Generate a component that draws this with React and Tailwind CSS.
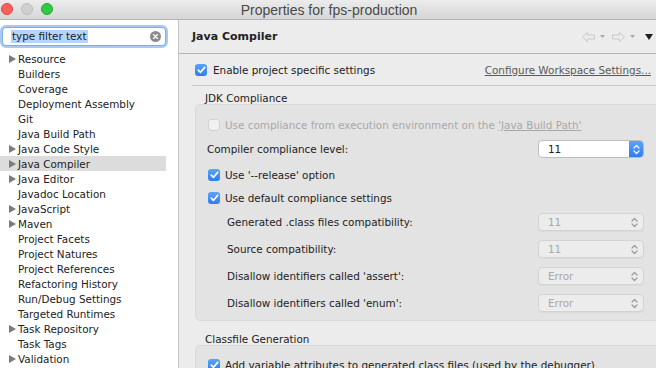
import React from "react";

const FONT = { fontFamily: '"DejaVu Sans", Verdana, sans-serif' };

const tree = [
  ["Resource", true],
  ["Builders", false],
  ["Coverage", false],
  ["Deployment Assembly", false],
  ["Git", false],
  ["Java Build Path", false],
  ["Java Code Style", true],
  ["Java Compiler", true, true],
  ["Java Editor", true],
  ["Javadoc Location", false],
  ["JavaScript", true],
  ["Maven", true],
  ["Project Facets", false],
  ["Project Natures", false],
  ["Project References", false],
  ["Refactoring History", false],
  ["Run/Debug Settings", false],
  ["Targeted Runtimes", false],
  ["Task Repository", true],
  ["Task Tags", false],
  ["Validation", true],
];

function Check({ disabled }) {
  if (disabled) {
    return (
      <span className="w-[12px] h-[12px] shrink-0 rounded-[3px] border border-[#d2d2d2] bg-[#f1f1f1]" />
    );
  }
  return (
    <span className="w-[12px] h-[12px] shrink-0 rounded-[3px] bg-gradient-to-b from-[#5aa2fb] to-[#2f7cf1] flex items-center justify-center">
      <svg width="9" height="8" viewBox="0 0 9 8">
        <path d="M1.3 4.2 L3.5 6.3 L7.7 1.4" fill="none" stroke="white" strokeWidth="1.7" strokeLinecap="round" strokeLinejoin="round" />
      </svg>
    </span>
  );
}

function Chevrons({ color }) {
  return (
    <svg width="7" height="11" viewBox="0 0 7 11">
      <path d="M1 4 L3.5 1.5 L6 4 M1 7 L3.5 9.5 L6 7" fill="none" stroke={color} strokeWidth="1.2" strokeLinecap="round" strokeLinejoin="round" />
    </svg>
  );
}

function Select({ value, disabled }) {
  if (disabled) {
    return (
      <div className="ml-auto w-[106px] h-[18px] rounded-[4px] border border-[#d3d3d3] bg-[#ececec] flex items-center pl-[9px] pr-[5px] text-[#a9a9a9] shadow-[0_1px_0_rgba(0,0,0,0.03)]">
        <span className="flex-1">{value}</span>
        <Chevrons color="#9a9a9a" />
      </div>
    );
  }
  return (
    <div className="ml-auto w-[106px] h-[18px] rounded-[4px] border border-[#bdbdbd] bg-white flex items-center overflow-hidden text-[#222]">
      <span className="flex-1 pl-[9px]">{value}</span>
      <span className="w-[14px] h-full bg-gradient-to-b from-[#5ba2fb] to-[#2f7cf1] flex items-center justify-center">
        <Chevrons color="white" />
      </span>
    </div>
  );
}

function NavArrow({ dir }) {
  const d =
    dir === "left"
      ? "M0.5 5 L5.5 0.5 L5.5 3 L12.5 3 L12.5 7 L5.5 7 L5.5 9.5 Z"
      : "M12.5 5 L7.5 0.5 L7.5 3 L0.5 3 L0.5 7 L7.5 7 L7.5 9.5 Z";
  return (
    <svg width="13" height="10" viewBox="0 0 13 10">
      <path d={d} fill="none" stroke="#c9c9c9" strokeWidth="1" strokeLinejoin="round" />
    </svg>
  );
}

function SmallTri({ color, w = 5, h = 3 }) {
  return (
    <svg width={w} height={h} viewBox={`0 0 ${w} ${h}`}>
      <polygon points={`0,0 ${w},0 ${w / 2},${h}`} fill={color} />
    </svg>
  );
}

export default function App() {
  return (
    <div
      className="w-[656px] h-[368px] overflow-hidden flex flex-col text-[10.4px] leading-[12px] text-[#222] bg-[#ececec]"
      style={FONT}
    >
      {/* Title bar */}
      <div className="h-[20px] shrink-0 relative flex items-center justify-center bg-gradient-to-b from-[#ececec] to-[#d6d6d6] border-b border-[#b3b3b3]">
        <div className="absolute left-[1px] top-[3px] flex gap-[8px]">
          <span className="w-[12px] h-[12px] rounded-full bg-[#fc605c] border border-[#e0443e]" />
          <span className="w-[12px] h-[12px] rounded-full bg-[#d0d0d0] border border-[#bdbdbd]" />
          <span className="w-[12px] h-[12px] rounded-full bg-[#34c84a] border border-[#20a830]" />
        </div>
        <span
          className="text-[14px] text-[#4a4a4a] leading-[16px] pl-[2px]"
          style={{ fontFamily: '"Liberation Sans", Arial, sans-serif' }}
        >
          Properties for fps-production
        </span>
      </div>

      <div className="flex-1 flex min-h-0">
        {/* Left tree */}
        <aside className="w-[179px] shrink-0 bg-white border-r border-[#c5c5c5] flex flex-col">
          <div className="mt-[7px] ml-[2px] w-[164px] h-[19px] rounded-[4px] bg-white border border-[#7fadea] shadow-[0_0_0_2px_#a9c9f3] flex items-center pl-[8px] pr-[4px]">
            <span className="bg-[#b4d5fe] px-[1px] leading-[13px]">type filter text</span>
            <span className="ml-auto w-[11px] h-[11px] rounded-full bg-[#8c8c8c] flex items-center justify-center">
              <svg width="5" height="5" viewBox="0 0 5 5">
                <path d="M0.5 0.5 L4.5 4.5 M4.5 0.5 L0.5 4.5" stroke="white" strokeWidth="1.2" strokeLinecap="round" />
              </svg>
            </span>
          </div>
          <ul className="mt-[5px] w-[166px]">
            {tree.map(([name, arrow, sel]) => (
              <li
                key={name}
                className={`h-[15px] flex items-center ${sel ? "bg-[#dcdcdc]" : ""}`}
              >
                <span className="w-[18px] shrink-0 flex justify-end pr-[2px]">
                  {arrow && (
                    <svg width="7" height="8" viewBox="0 0 7 8">
                      <polygon points="0,0 7,4 0,8" fill="#7b7b7b" />
                    </svg>
                  )}
                </span>
                <span>{name}</span>
              </li>
            ))}
          </ul>
        </aside>

        {/* Right panel */}
        <main className="flex-1 min-w-0 overflow-hidden flex flex-col">
          <div className="h-[34px] shrink-0 flex items-center pl-[13px] pr-[3px] border-b border-[#b2b2b2]">
            <span className="font-bold text-[11px]">Java Compiler</span>
            <div className="ml-auto flex items-center">
              <NavArrow dir="left" />
              <span className="ml-[5px] mr-[7px] flex"><SmallTri color="#a8a8a8" /></span>
              <NavArrow dir="right" />
              <span className="ml-[5px] mr-[10px] flex"><SmallTri color="#a8a8a8" /></span>
              <SmallTri color="#1f1f1f" w={8} h={6} />
            </div>
          </div>

          <div className="ml-[13px] h-[32px] shrink-0 flex items-center pl-[3px] pr-[5px] border-b border-[#c9c9c9]">
            <Check />
            <span className="ml-[6px]">Enable project specific settings</span>
            <span className="ml-auto text-[#595959] underline">Configure Workspace Settings...</span>
          </div>

          <div className="h-[18px] shrink-0 pl-[26px] pt-[6px]">JDK Compliance</div>

          <section className="ml-[16px] w-[470px] shrink-0 rounded-[5px] border border-[#d9d9d9] bg-[#e3e3e3] pl-[11px] pr-[20px] pt-[11px] pb-[8px] flex flex-col">
            <div className="h-[18px] flex items-center pl-[1px]">
              <Check disabled />
              <span className="ml-[5px] text-[#a8a8a8]">
                Use compliance from execution environment on the{" "}
                <span className="underline">'Java Build Path'</span>
              </span>
            </div>
            <div className="mt-[6px] h-[18px] flex items-center">
              <span>Compiler compliance level:</span>
              <Select value="11" />
            </div>
            <div className="mt-[8px] h-[18px] flex items-center pl-[1px]">
              <Check />
              <span className="ml-[5px]">Use '--release' option</span>
            </div>
            <div className="mt-[5px] h-[18px] flex items-center pl-[1px]">
              <Check />
              <span className="ml-[5px]">Use default compliance settings</span>
            </div>
            <div className="mt-[6px] h-[18px] flex items-center pl-[20px]">
              <span>Generated .class files compatibility:</span>
              <Select value="11" disabled />
            </div>
            <div className="mt-[9px] h-[18px] flex items-center pl-[20px]">
              <span>Source compatibility:</span>
              <Select value="11" disabled />
            </div>
            <div className="mt-[9px] h-[18px] flex items-center pl-[20px]">
              <span>Disallow identifiers called 'assert':</span>
              <Select value="Error" disabled />
            </div>
            <div className="mt-[9px] h-[18px] flex items-center pl-[20px]">
              <span>Disallow identifiers called 'enum':</span>
              <Select value="Error" disabled />
            </div>
          </section>

          <div className="h-[24px] shrink-0 pl-[26px] pt-[12px]">Classfile Generation</div>

          <section className="ml-[16px] w-[470px] shrink-0 rounded-[5px] border border-[#d9d9d9] bg-[#e3e3e3] pl-[12px] pt-[10px] h-[40px]">
            <div className="h-[18px] flex items-center">
              <Check />
              <span className="ml-[5px]">Add variable attributes to generated class files (used by the debugger)</span>
            </div>
          </section>
        </main>
      </div>
    </div>
  );
}
